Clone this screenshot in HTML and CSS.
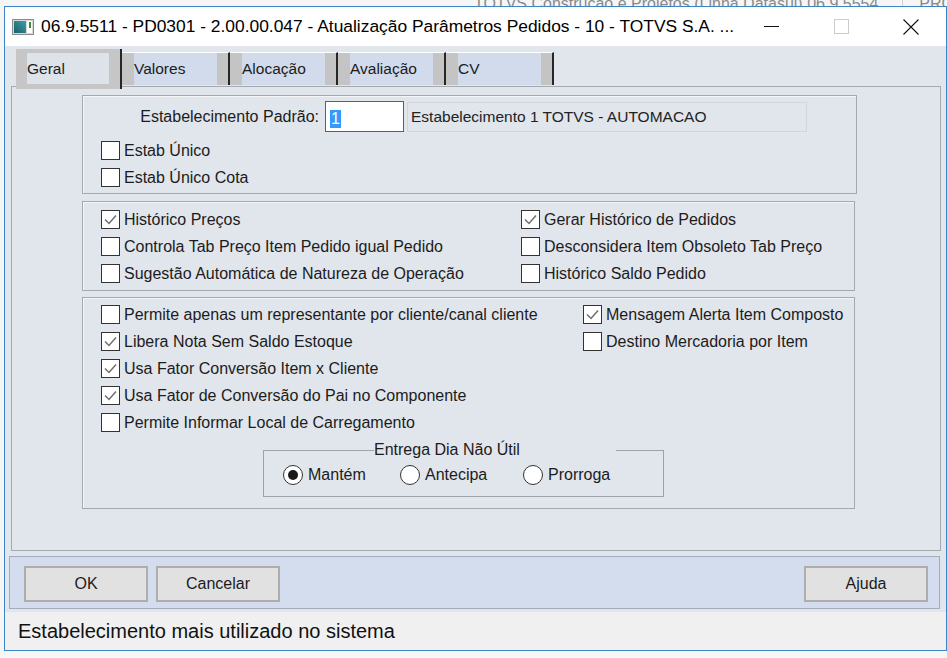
FILE: index.html
```html
<!DOCTYPE html>
<html lang="pt-BR">
<head>
    <meta charset="UTF-8">
    <title>PD0301 - Atualização Parâmetros Pedidos</title>
    <link rel="stylesheet" href="styles.css">
</head>
<body>
    <div class="desk-peek">
        <span class="peek-text first">TOTVS Construção e Projetos (Linha Datasul) 06.9.5554</span>
        <span class="peek-sep"></span>
        <span class="peek-text">PRO</span>
    </div>

    <div class="window">
        <div class="titlebar">
            <svg class="app-icon" width="22" height="16" viewBox="0 0 22 16">
                <rect x="0.5" y="0.5" width="21" height="15" fill="#d9d9d9" stroke="#8a8a8a"/>
                <defs>
                    <linearGradient id="appgrad" x1="0" y1="1" x2="1" y2="0">
                        <stop offset="0" stop-color="#1d5f6a"/>
                        <stop offset="1" stop-color="#3aa0a8"/>
                    </linearGradient>
                </defs>
                <rect x="2" y="2" width="12" height="12" fill="url(#appgrad)"/>
                <rect x="15" y="2" width="5" height="12" fill="#ffffff"/>
                <rect x="17" y="3" width="2" height="6" fill="#3c8a3c"/>
            </svg>
            <span class="title">06.9.5511 - PD0301 - 2.00.00.047 - Atualização Parâmetros Pedidos - 10 - TOTVS S.A. ...</span>
            <div class="controls">
                <span class="ctl"><span class="min-bar"></span></span>
                <span class="ctl">
                    <svg width="15" height="15" viewBox="0 0 15 15"><rect x="0.5" y="0.5" width="14" height="14" fill="none" stroke="#cccccc"/></svg>
                </span>
                <span class="ctl">
                    <svg width="16" height="16" viewBox="0 0 16 16"><path d="M0.5 0.5 L15.5 15.5 M15.5 0.5 L0.5 15.5" stroke="#111" stroke-width="1.1"/></svg>
                </span>
            </div>
        </div>

        <div class="client">
            <div class="tabs">
                <div class="tab active"><span>Geral</span></div>
                <div class="tab"><span>Valores</span></div>
                <div class="tab"><span>Alocação</span></div>
                <div class="tab"><span>Avaliação</span></div>
                <div class="tab"><span>CV</span></div>
            </div>

            <div class="panel">
                <div class="group g1">
                    <div class="field-row">
                        <label class="field-label">Estabelecimento Padrão:</label>
                        <div class="input focus"><span class="sel">1</span></div>
                        <div class="input ro">Estabelecimento 1 TOTVS - AUTOMACAO</div>
                    </div>
                    <div class="col">
                        <div class="check"><span class="box"></span>Estab Único</div>
                        <div class="check"><span class="box"></span>Estab Único Cota</div>
                    </div>
                </div>

                <div class="group g2">
                    <div class="cols">
                        <div class="col left">
                            <div class="check on"><span class="box"></span>Histórico Preços</div>
                            <div class="check"><span class="box"></span>Controla Tab Preço Item Pedido igual Pedido</div>
                            <div class="check"><span class="box"></span>Sugestão Automática de Natureza de Operação</div>
                        </div>
                        <div class="col">
                            <div class="check on"><span class="box"></span>Gerar Histórico de Pedidos</div>
                            <div class="check"><span class="box"></span>Desconsidera Item Obsoleto Tab Preço</div>
                            <div class="check"><span class="box"></span>Histórico Saldo Pedido</div>
                        </div>
                    </div>
                </div>

                <div class="group g3">
                    <div class="cols">
                        <div class="col left">
                            <div class="check"><span class="box"></span>Permite apenas um representante por cliente/canal cliente</div>
                            <div class="check on"><span class="box"></span>Libera Nota Sem Saldo Estoque</div>
                            <div class="check on"><span class="box"></span>Usa Fator Conversão Item x Cliente</div>
                            <div class="check on"><span class="box"></span>Usa Fator de Conversão do Pai no Componente</div>
                            <div class="check"><span class="box"></span>Permite Informar Local de Carregamento</div>
                        </div>
                        <div class="col">
                            <div class="check on"><span class="box"></span>Mensagem Alerta Item Composto</div>
                            <div class="check"><span class="box"></span>Destino Mercadoria por Item</div>
                        </div>
                    </div>

                    <fieldset class="radios">
                        <legend>Entrega Dia Não Útil</legend>
                        <div class="radio-row">
                            <div class="radio on"><span class="dot"></span>Mantém</div>
                            <div class="radio"><span class="dot"></span>Antecipa</div>
                            <div class="radio"><span class="dot"></span>Prorroga</div>
                        </div>
                    </fieldset>
                </div>
            </div>

            <div class="buttonbar">
                <button class="btn">OK</button>
                <button class="btn">Cancelar</button>
                <span class="spacer"></span>
                <button class="btn">Ajuda</button>
            </div>
        </div>

        <div class="statusbar">Estabelecimento mais utilizado no sistema</div>
    </div>
</body>
</html>
```

FILE: styles.css
```css
body {
    margin: 0;
    background-color: #f6f6f6;
    font-family: "Liberation Sans", Arial, sans-serif;
    color: #1c1c1c;
    overflow: hidden;
}

/* what shows of the window behind */
.desk-peek {
    height: 6px;
    overflow: hidden;
    display: flex;
    justify-content: flex-end;
    align-items: flex-end;
    margin-right: -7px;
}

.peek-text {
    font-size: 16px;
    line-height: 16px;
    margin-bottom: -6px;
    color: #8a8a8a;
    white-space: nowrap;
}

.peek-text.first {
    margin-right: 24px;
}

.peek-sep {
    width: 1px;
    height: 6px;
    margin-right: 16px;
    background-color: #d0d0d0;
}

.window {
    margin-left: 4px;
    width: 941px;
    height: 643px;
    border: 1px solid #3c84c8;
    background-color: #ffffff;
    display: flex;
    flex-direction: column;
}

.titlebar {
    height: 39px;
    flex-shrink: 0;
    display: flex;
    align-items: center;
    padding-left: 7px;
    background-color: #ffffff;
}

.app-icon {
    margin-top: 1px;
}

.title {
    margin-left: 7px;
    font-size: 17.4px;
    color: #000000;
    white-space: nowrap;
}

.controls {
    margin-left: auto;
    display: flex;
    align-items: center;
    height: 100%;
}

.ctl {
    width: 70px;
    display: flex;
    justify-content: center;
    align-items: center;
}

.min-bar {
    width: 15px;
    height: 1px;
    background-color: #111111;
}

.client {
    height: 566px;
    flex-shrink: 0;
    background-color: #e1e5ec;
}

/* tabs */
.tabs {
    display: flex;
    align-items: flex-start;
    padding-top: 3px;
    padding-left: 11px;
    height: 40px;
    margin-bottom: -3px;
    position: relative;
    z-index: 1;
}

.tab {
    display: flex;
    margin-top: 3px;
    height: 32px;
    border-top: 1px solid #ffffff;
    background-color: #c4c4c4;
    padding: 0 11px 0 12px;
    border-right: 2px solid #262626;
}

.tab span {
    width: 83px;
    background-color: #d1dbeb;
    font-size: 15.5px;
    line-height: 32px;
}

.tab.active {
    margin-top: 0;
    height: 40px;
    border-top: none;
    padding: 4px 11px 5px 11px;
    box-sizing: border-box;
    background-color: #c6c6c6;
}

.tab.active span {
    width: 82px;
    background-color: #dee2e9;
    line-height: 31px;
}

.panel {
    margin-left: 6px;
    width: 928px;
    height: 455px;
    border: 1px solid #a4a9b2;
    padding-top: 8px;
}

.group {
    margin-left: 70px;
    width: 773px;
    border: 1px solid #a3a8b1;
    box-shadow: inset 1px 1px 0 #f3f5f8;
}

.g1 {
    height: 97px;
}

.g2 {
    margin-top: 7px;
    height: 90px;
    padding-top: 4px;
    box-sizing: border-box;
}

.g3 {
    margin-top: 6px;
    height: 212px;
    padding-top: 3px;
    box-sizing: border-box;
}

.field-row {
    display: flex;
    align-items: center;
    padding-top: 5px;
    margin-bottom: 5px;
}

.field-label {
    width: 236px;
    text-align: right;
    font-size: 16px;
}

.input {
    height: 31px;
    box-sizing: border-box;
    font-size: 16px;
    display: flex;
    align-items: center;
}

.input.focus {
    margin-left: 6px;
    width: 79px;
    border: 1px solid #0078d7;
    background-color: #ffffff;
    padding-left: 4px;
}

.sel {
    background-color: #3399ff;
    color: #ffffff;
    line-height: 18px;
    padding: 0 1px;
    margin-top: 5px;
}

.input.ro {
    margin-left: 3px;
    width: 400px;
    height: 30px;
    border: 1px solid #d2d5da;
    padding-left: 3px;
    font-size: 15.5px;
    color: #222222;
}

.g1 .col {
    padding-left: 18px;
}

.cols {
    display: flex;
    padding-left: 18px;
}

.g2 .left {
    width: 420px;
}

.g3 .left {
    width: 482px;
}

.check {
    height: 27px;
    display: flex;
    align-items: center;
    font-size: 16px;
    white-space: nowrap;
}

.box {
    width: 19px;
    height: 19px;
    box-sizing: border-box;
    border: 1px solid #333333;
    background-color: #ffffff;
    margin-right: 4px;
    flex-shrink: 0;
}

.check.on .box {
    background-image: url("data:image/svg+xml,%3Csvg xmlns='http://www.w3.org/2000/svg' width='17' height='17' viewBox='0 0 17 17'%3E%3Cpolyline points='3,8.5 7,12.5 14,4.5' fill='none' stroke='%23707070' stroke-width='1.5'/%3E%3C/svg%3E");
}

/* radio set */
.radios {
    margin: 5px 0 0 180px;
    width: 401px;
    box-sizing: border-box;
    height: 56px;
    border: 1px solid #9ea3ab;
    padding: 0;
}

.radios legend {
    margin-left: 110px;
    padding: 0 96px 0 0;
    font-size: 16px;
    line-height: 18px;
}

.radio-row {
    display: grid;
    grid-template-columns: 117px 123px auto;
    padding: 6px 0 0 19px;
}

.radio {
    display: flex;
    align-items: center;
    font-size: 16px;
    height: 20px;
}

.dot {
    width: 20px;
    height: 20px;
    box-sizing: border-box;
    border-radius: 50%;
    border: 1px solid #333333;
    background-color: #ffffff;
    margin-right: 5px;
    display: flex;
    align-items: center;
    justify-content: center;
}

.radio.on .dot::after {
    content: "";
    width: 10px;
    height: 10px;
    border-radius: 50%;
    background-color: #1a1a1a;
}

/* buttons */
.buttonbar {
    margin: 5px 0 0 4px;
    width: 904px;
    height: 42px;
    border: 1px solid #a3acbb;
    background-color: #d4ddee;
    display: flex;
    align-items: flex-start;
    padding: 9px 11px 0 14px;
    gap: 8px;
}

.spacer {
    flex: 1;
}

.btn {
    width: 124px;
    height: 36px;
    border: 2px solid #adadad;
    background-color: #e1e1e1;
    font-family: "Liberation Sans", Arial, sans-serif;
    font-size: 16px;
    color: #1c1c1c;
    padding: 0;
}

.statusbar {
    height: 38px;
    flex-shrink: 0;
    background-color: #f0f0f0;
    padding-left: 13px;
    font-size: 20px;
    line-height: 38px;
    color: #111111;
    white-space: nowrap;
}
```
